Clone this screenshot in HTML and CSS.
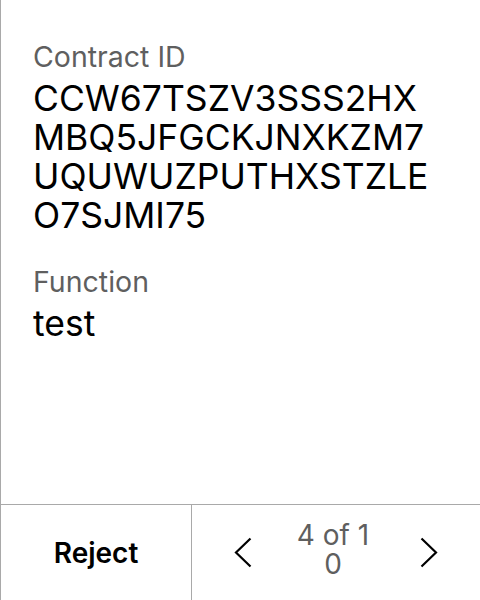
FILE: index.html
```html
<!DOCTYPE html>
<html>
<head>
<meta charset="utf-8">
<link rel="stylesheet" href="styles.css">
</head>
<body>
<div class="screen">
  <div class="content">
    <div class="field">
      <div class="label">Contract ID</div>
      <div class="value">CCW67TSZV3SSS2HXMBQ5JFGCKJNXKZM7UQUWUZPUTHXSTZLEO7SJMI75</div>
    </div>
    <div class="field">
      <div class="label">Function</div>
      <div class="value">test</div>
    </div>
  </div>
  <div class="footer">
    <div class="reject">Reject</div>
    <div class="pager">
      <div class="nav"><svg width="18" height="31" viewBox="0 0 18 31"><path d="M16.5 1.5 L2 15.5 L16.5 29.5" fill="none" stroke="#000" stroke-width="2.2"/></svg></div>
      <div class="count">4 of 10</div>
      <div class="nav"><svg width="18" height="31" viewBox="0 0 18 31"><path d="M1.5 1.5 L16 15.5 L1.5 29.5" fill="none" stroke="#000" stroke-width="2.2"/></svg></div>
    </div>
  </div>
</div>
</body>
</html>
```
FILE: styles.css
```css
html, body {
  margin: 0;
  padding: 0;
  background: #fff;
}
body {
  font-family: Inter, "Noto Sans", sans-serif;
  color: #000;
}
.screen {
  width: 479px;
  height: 600px;
  border-left: 1px solid #a9a9a9;
  display: flex;
  flex-direction: column;
}
.content {
  flex: 1;
  padding: 40px 50px 0 32px;
  display: flex;
  flex-direction: column;
  gap: 30px;
}
.label {
  font-size: 28.5px;
  line-height: 34px;
  color: #5f5f5f;
}
.value {
  font-size: 35.5px;
  line-height: 39px;
  word-break: break-all;
  margin-top: 5px;
}
.footer {
  height: 95px;
  border-top: 1px solid #a9a9a9;
  display: grid;
  grid-template-columns: 191px 1fr;
}
.reject {
  border-right: 1px solid #a9a9a9;
  display: flex;
  align-items: center;
  justify-content: center;
  font-size: 28px;
  font-weight: 600;
}
.pager {
  display: flex;
  align-items: center;
  justify-content: center;
  gap: 29px;
}
.nav {
  width: 48px;
  display: flex;
  justify-content: center;
  align-items: center;
}
.count {
  box-sizing: border-box;
  width: 80px;
  padding: 0 6px 6px 0;
  text-align: center;
  font-size: 28px;
  line-height: 29px;
  color: #5f5f5f;
  word-break: break-all;
}
```
